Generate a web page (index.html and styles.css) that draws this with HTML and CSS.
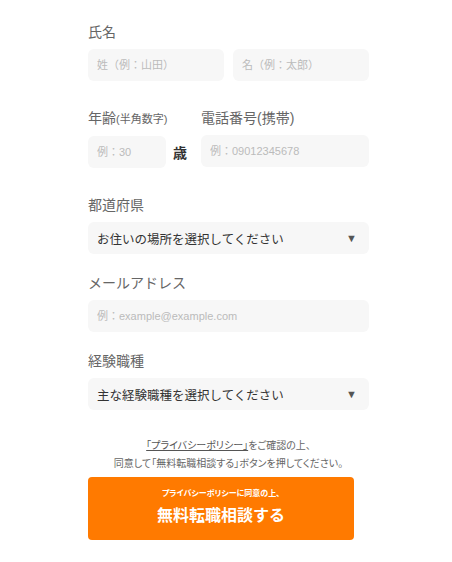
FILE: index.html
```html
<!DOCTYPE html>
<html lang="ja">

<head>
  <meta charset="UTF-8" />
  <meta name="viewport" content="width=device-width, initial-scale=1.0" />
  <title>無料転職相談</title>
  <link rel="stylesheet" href="styles.css">
</head>

<body>
  <form class="entry-form" onsubmit="event.preventDefault();">
    <!-- 氏名 -->
    <div class="field">
      <label class="field-label">氏名</label>
      <div class="two-columns">
        <input type="text" class="text-input" placeholder="姓（例：山田）" />
        <input type="text" class="text-input" placeholder="名（例：太郎）" />
      </div>
    </div>

    <!-- 年齢・電話番号 -->
    <div class="field age-row">
      <div class="age-group">
        <label class="field-label">年齢<small>(半角数字)</small></label>
        <div class="age-inline">
          <input type="text" class="text-input age-input" placeholder="例：30" />
          <span class="unit">歳</span>
        </div>
      </div>
      <div class="phone-group">
        <label class="field-label">電話番号(携帯)</label>
        <input type="tel" class="text-input" placeholder="例：09012345678" />
      </div>
    </div>

    <!-- 都道府県 -->
    <div class="field">
      <label class="field-label">都道府県</label>
      <div class="select-box">
        <span>お住いの場所を選択してください</span>
        <span class="arrow">▼</span>
      </div>
    </div>

    <!-- メール -->
    <div class="field field-tight">
      <label class="field-label">メールアドレス</label>
      <input type="email" class="text-input" placeholder="例：example@example.com" />
    </div>

    <!-- 経験職種 -->
    <div class="field field-tight">
      <label class="field-label">経験職種</label>
      <div class="select-box">
        <span>主な経験職種を選択してください</span>
        <span class="arrow">▼</span>
      </div>
    </div>

    <p class="policy-note">
      <a href="#">「プライバシーポリシー」</a>をご確認の上、<br>
      同意して「無料転職相談する」ボタンを押してください。
    </p>

    <button type="submit" class="submit-btn">
      <span class="submit-sub">プライバシーポリシーに同意の上、</span>
      <span class="submit-main">無料転職相談する</span>
    </button>
  </form>
</body>

</html>
```

FILE: styles.css
```css
body {
  margin: 0;
  background-color: #ffffff;
  font-family: "Liberation Sans", "Noto Sans CJK JP", sans-serif;
  color: #333;
}

.entry-form {
  width: 281px;
  margin-left: 88px;
  padding-top: 22px;
}

.field {
  margin-bottom: 27px;
}

.field-tight {
  margin-top: -8px;
}

.field-label {
  display: block;
  font-size: 14px;
  line-height: 20px;
  color: #666;
  margin-bottom: 7px;
}

.field-label small {
  font-size: 11px;
}

.two-columns {
  display: flex;
  gap: 9px;
}

.two-columns .text-input {
  flex: 1;
  min-width: 0;
}

.text-input {
  display: block;
  width: 100%;
  height: 32px;
  box-sizing: border-box;
  border: none;
  border-radius: 6px;
  background-color: #f7f7f7;
  padding: 0 9px;
  font-family: inherit;
  font-size: 11px;
  color: #333;
  outline: none;
}

.text-input::placeholder {
  color: #bbb;
}

.age-row {
  display: flex;
  gap: 14px;
}

.age-inline {
  display: flex;
  align-items: center;
  gap: 7px;
}

.age-input {
  width: 78px;
}

.unit {
  font-size: 14px;
  color: #333;
  font-weight: bold;
}

.phone-group {
  flex: 1;
}

.select-box {
  height: 32px;
  box-sizing: border-box;
  border-radius: 6px;
  background-color: #f7f7f7;
  padding: 0 12px 0 9px;
  display: flex;
  align-items: center;
  justify-content: space-between;
  font-size: 12.5px;
  color: #333;
}

.select-box .arrow {
  font-size: 11px;
  color: #555;
}

.policy-note {
  margin: 0 0 4px;
  text-align: center;
  font-size: 10px;
  line-height: 18px;
  color: #666;
  font-feature-settings: "palt";
}

.policy-note a {
  color: #555;
  text-decoration: underline;
}

.submit-btn {
  width: 266px;
  height: 63px;
  border: none;
  border-radius: 4px;
  background-color: #ff7a00;
  color: #fff;
  display: flex;
  flex-direction: column;
  align-items: center;
  padding: 11px 0 0;
  gap: 5px;
  font-family: inherit;
  cursor: pointer;
}

.submit-sub {
  font-size: 8px;
  line-height: 12px;
  font-weight: bold;
  font-feature-settings: "palt";
}

.submit-main {
  font-size: 16px;
  line-height: 22px;
  font-weight: bold;
}
```
